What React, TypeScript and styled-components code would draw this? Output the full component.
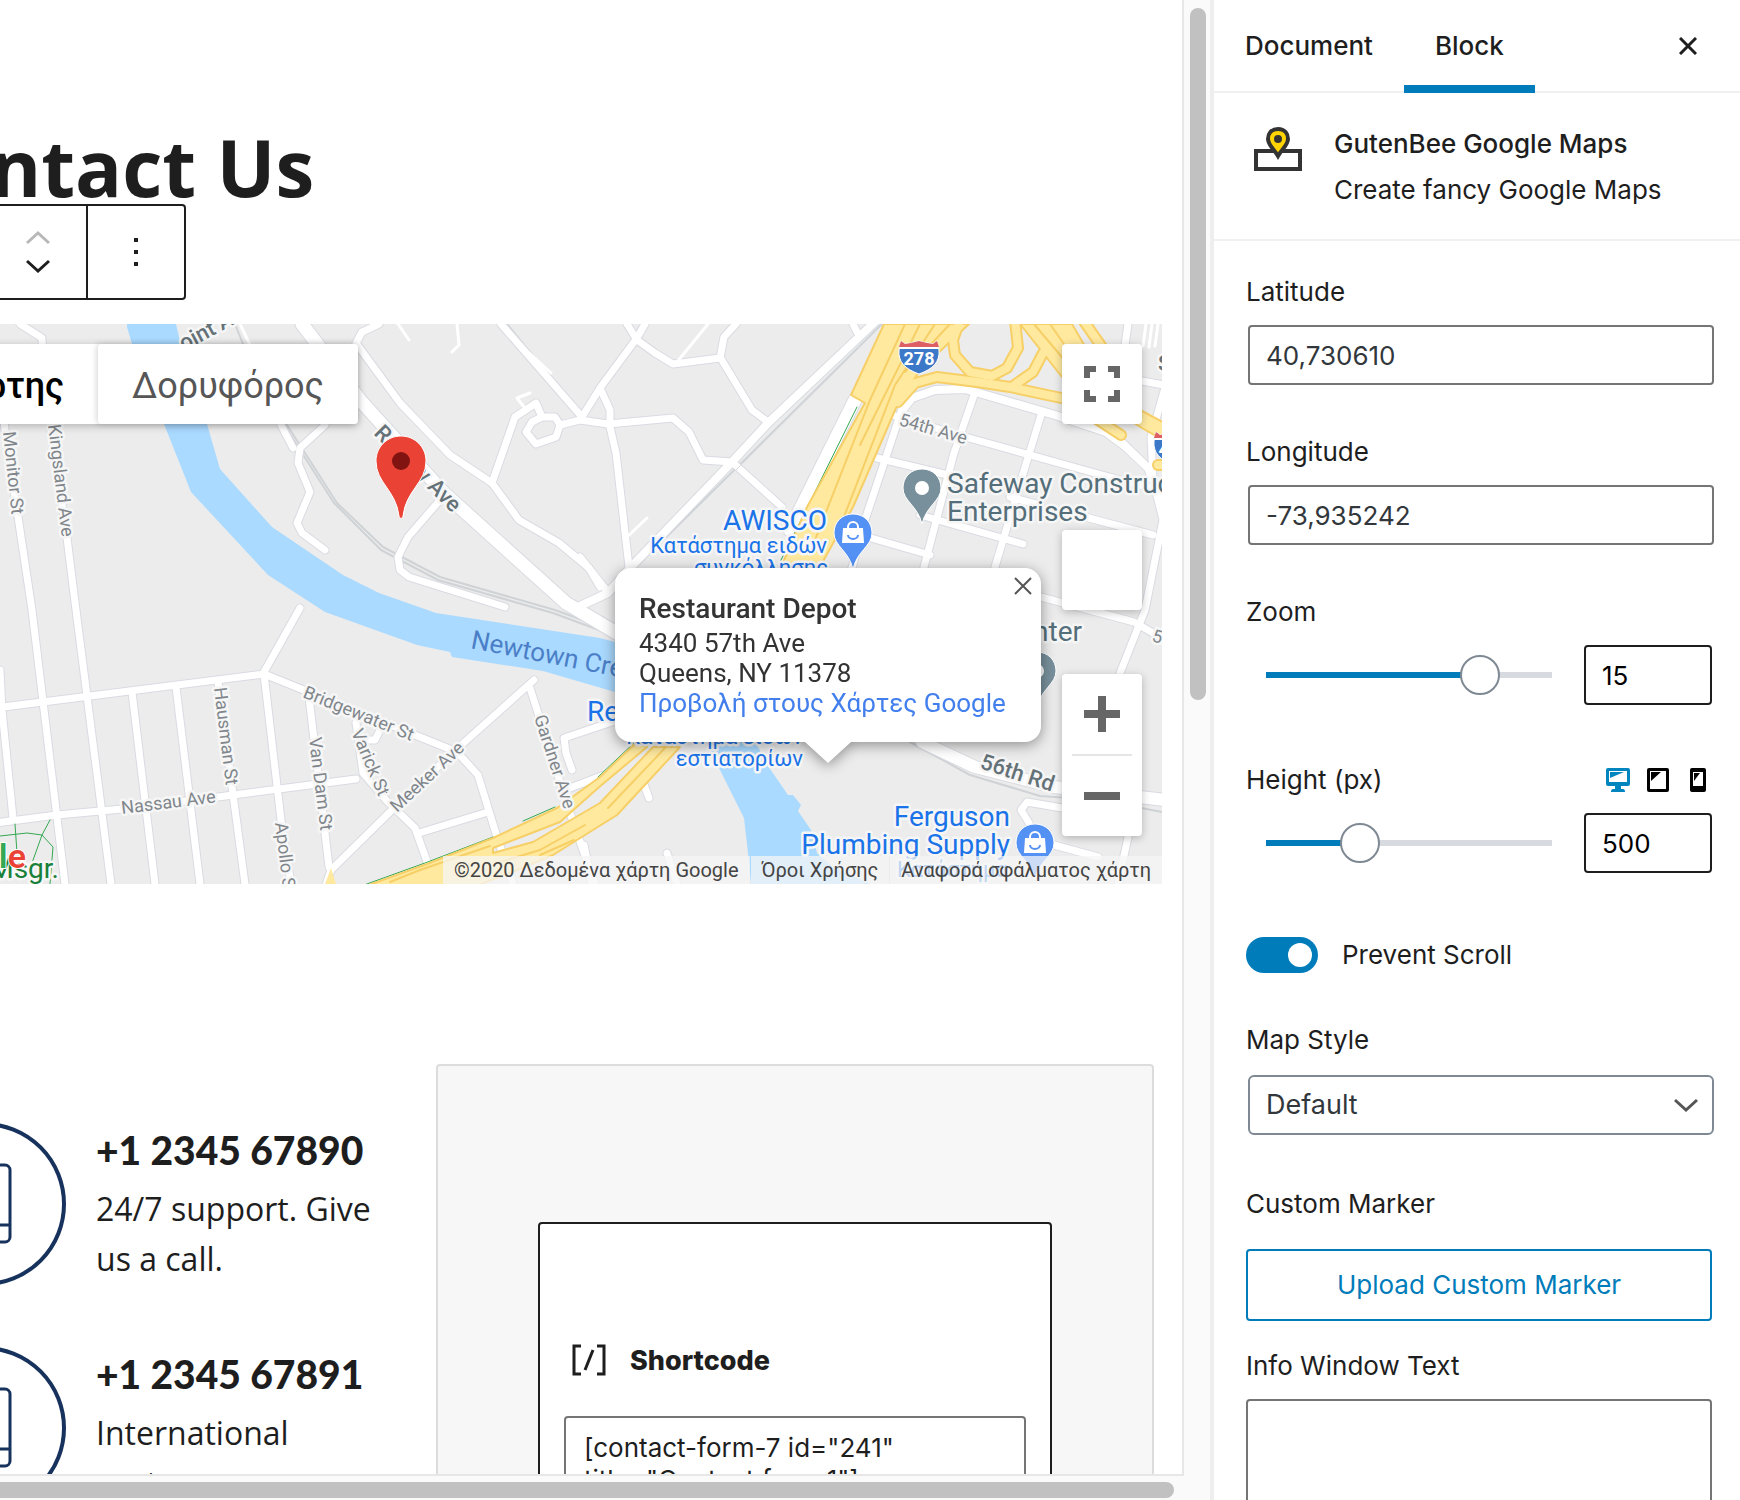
import React, { useState } from "react";
import styled, { createGlobalStyle, css } from "styled-components";

const ui = `Inter, "Liberation Sans", sans-serif`;
const body = `"Open Sans", "Noto Sans", sans-serif`;
const maps = `Roboto, "Noto Sans", sans-serif`;
const accent = "#007cba";
const ink = "#1e1e1e";

const GlobalStyle = createGlobalStyle`
  *, *::before, *::after { box-sizing: border-box; }
  body { margin: 0; background: #fff; color: ${ink}; font-family: ${ui}; font-size: 26px; }
  button, input, select, textarea { font: inherit; color: inherit; margin: 0; }
  h1, h2, h3, p { margin: 0; }
`;

/* ---------- shell ---------- */

const Shell = styled.div`
  display: grid;
  grid-template-columns: minmax(0, 1fr) 530px;
  grid-template-rows: minmax(0, 1fr);
  height: 100vh;
  overflow: hidden;
`;

const Editor = styled.main`
  display: grid;
  grid-template-columns: minmax(0, 1fr) 26px;
  grid-template-rows: minmax(0, 1fr) 24px;
  background: #fafafa;
`;

const Canvas = styled.div`
  overflow: hidden;
  background: #fff;
  border: solid #e7e7e7;
  border-width: 0 2px 2px 0;
`;

const Content = styled.div`
  margin-left: -140px;
  padding: 130px 20px 0 0;
`;

const TrackY = styled.div`
  padding: 8px 4px 0 6px;
`;

const TrackX = styled.div`
  padding: 6px 10px 2px 0;
`;

const ThumbY = styled.div`
  height: 692px;
  width: 16px;
  border-radius: 8px;
  background: #c1c1c1;
`;

const ThumbX = styled.div`
  height: 16px;
  border-radius: 0 8px 8px 0;
  background: #c1c1c1;
`;

/* ---------- canvas blocks ---------- */

const PageTitle = styled.h1`
  padding-left: 32px;
  font: 700 78px/74px ${body};
`;

const Toolbar = styled.div`
  display: flex;
  width: 326px;
  height: 96px;
  margin-bottom: 24px;
  border: 2px solid ${ink};
  border-radius: 4px;
  background: #fff;
`;

const Movers = styled.div`
  flex: 1;
  display: flex;
  flex-direction: column;
  justify-content: center;
  align-items: flex-end;
  gap: 4px;
  padding-right: 32px;
  border-right: 2px solid ${ink};
`;

const IconButton = styled.button`
  display: flex;
  align-items: center;
  justify-content: center;
  padding: 0;
  border: 0;
  background: none;
  cursor: pointer;
`;

const MoverButton = styled(IconButton)`
  width: 32px;
  height: 24px;
`;

const MoreButton = styled(IconButton)`
  width: 96px;
`;

const MapFrame = styled.section`
  position: relative;
  height: 560px;
  overflow: hidden;
  background: #ececec;
  font-family: ${maps};
`;

const MapDrawing = styled.svg`
  position: absolute;
  top: 0;
  right: 0;
  font-family: ${maps};
`;

const mapControl = css`
  position: absolute;
  background: #fff;
  border-radius: 4px;
  box-shadow: 0 2px 8px rgba(0, 0, 0, 0.25);
`;

const MapTypes = styled.div`
  ${mapControl}
  top: 20px;
  left: 20px;
  display: flex;
  height: 80px;
`;

const MapType = styled.button<{ $active?: boolean }>`
  border: 0;
  border-radius: 4px;
  background: #fff;
  padding: 4px 34px 0;
  font-size: 36px;
  font-weight: ${(p) => (p.$active ? 500 : 400)};
  color: ${(p) => (p.$active ? "#000" : "#565656")};
  width: ${(p) => (p.$active ? 218 : 260)}px;
  text-align: right;
  ${(p) => !p.$active && "box-shadow: -1px 0 6px rgba(0, 0, 0, 0.18);"}
`;

const Fullscreen = styled.button`
  ${mapControl}
  top: 20px;
  right: 20px;
  width: 80px;
  height: 80px;
  padding: 0;
  border: 0;
  display: grid;
  place-items: center;
`;

const Pegman = styled.div`
  ${mapControl}
  top: 206px;
  right: 20px;
  width: 80px;
  height: 80px;
`;

const ZoomControl = styled.div`
  ${mapControl}
  top: 350px;
  right: 20px;
  width: 80px;
  height: 162px;
  padding: 0 10px;
  display: flex;
  flex-direction: column;
`;

const ZoomButton = styled.button`
  flex: 1;
  padding: 0;
  border: 0;
  background: none;
  display: grid;
  place-items: center;
  & + & {
    border-top: 2px solid #e6e6e6;
  }
`;

const InfoWindow = styled.div`
  position: absolute;
  top: 244px;
  right: 121px;
  width: 426px;
  height: 174px;
  padding: 25px 24px 0;
  border-radius: 16px;
  background: #fff;
  color: #333;
  font-size: 26px;
  line-height: 30px;
  filter: drop-shadow(0 3px 7px rgba(0, 0, 0, 0.4));
  &::after {
    content: "";
    position: absolute;
    top: 100%;
    left: 50%;
    margin-left: -23px;
    border: solid transparent;
    border-width: 21px 23px 0;
    border-top-color: #fff;
  }
`;

const InfoTitle = styled.h2`
  font-size: 28px;
  line-height: 32px;
  font-weight: 500;
  margin-bottom: 3px;
`;

const InfoLink = styled.a`
  color: #427fed;
  text-decoration: none;
  white-space: nowrap;
`;

const InfoClose = styled.button`
  position: absolute;
  top: 6px;
  right: 6px;
  width: 24px;
  height: 24px;
  padding: 0;
  border: 0;
  background: none;
  display: grid;
  place-items: center;
`;

const Attribution = styled.div`
  position: absolute;
  right: 0;
  bottom: 0;
  display: flex;
  height: 28px;
  font-size: 20px;
  line-height: 28px;
  color: #444;
  white-space: nowrap;
  & > * {
    padding: 0 11px;
    background: rgba(245, 245, 245, 0.75);
  }
  & > * + * {
    margin-left: 1px;
  }
  a {
    color: inherit;
    text-decoration: none;
  }
`;

const Columns = styled.div`
  display: grid;
  grid-template-columns: minmax(0, 1fr) 718px;
  margin: 180px 8px 0 0;
`;

const Contacts = styled.div`
  display: flex;
  flex-direction: column;
  gap: 46px;
  padding: 58px 32px 0 42px;
`;

const Contact = styled.div`
  display: flex;
  gap: 30px;
  height: 178px;
`;

const ContactIcon = styled.svg`
  flex: none;
`;

const ContactTitle = styled.h3`
  padding-top: 4px;
  font: 900 39px/48px Lato, ${ui};
`;

const ContactText = styled.p`
  margin-top: 10px;
  font: 400 32px/50px ${body};
`;

const FormColumn = styled.div`
  height: 700px;
  padding: 156px 100px 0;
  border: 2px solid #dcdcdc;
  border-radius: 4px;
  background: #f7f7f7;
`;

const Shortcode = styled.div`
  height: 500px;
  padding: 112px 24px 0;
  border: 2px solid ${ink};
  border-radius: 4px;
  background: #fff;
`;

const ShortcodeLabel = styled.label`
  display: flex;
  align-items: center;
  gap: 24px;
  height: 48px;
  margin-bottom: 32px;
  padding-left: 8px;
  font-size: 27px;
  font-weight: 800;
`;

const CodeArea = styled.textarea`
  display: block;
  width: 100%;
  height: 160px;
  padding: 14px 18px;
  border: 2px solid #757575;
  border-radius: 4px;
  resize: none;
  overflow: hidden;
  font-size: 26px;
  line-height: 32px;
`;

/* ---------- sidebar ---------- */

const Sidebar = styled.aside`
  overflow: hidden;
  border-left: 4px solid #eeeeee;
  background: #fff;
  line-height: 32px;
`;

const Tabs = styled.div`
  display: flex;
  height: 93px;
  border-bottom: 2px solid #f0f0f0;
`;

const Tab = styled.button<{ $active?: boolean }>`
  height: 93px;
  padding: 0 31px 2px;
  border: 0;
  background: none;
  font-weight: 500;
  box-shadow: ${(p) => (p.$active ? `inset 0 -8px 0 ${accent}` : "none")};
`;

const CloseButton = styled(IconButton)`
  width: 48px;
  margin-left: auto;
  margin-right: 28px;
`;

const BlockCard = styled.div`
  display: flex;
  gap: 32px;
  padding: 28px 40px 0;
  height: 148px;
  border-bottom: 2px solid #f0f0f0;
`;

const BlockName = styled.h2`
  font-size: 26px;
  line-height: 46px;
  font-weight: 500;
`;

const BlockInfo = styled.p`
  line-height: 46px;
`;

const BlockIcon = styled.svg`
  margin-top: 6px;
  flex: none;
`;

const Panel = styled.div`
  display: flex;
  flex-direction: column;
  padding: 34px 28px 0 32px;
`;

const Field = styled.div<{ $h: number }>`
  height: ${(p) => p.$h}px;
`;

const LabelRow = styled.div<{ $gap?: number }>`
  display: flex;
  justify-content: space-between;
  align-items: center;
  height: 34px;
  margin-bottom: ${(p) => p.$gap ?? 16}px;
`;

const Devices = styled.div`
  display: flex;
  margin-right: -6px;
`;

const DeviceButton = styled(IconButton)`
  width: 40px;
  height: 32px;
`;

const box = css`
  display: block;
  height: 60px;
  border: 2px solid #757575;
  border-radius: 4px;
  background: #fff;
  padding: 0 16px;
`;

const TextInput = styled.input`
  ${box}
  width: 100%;
  margin-left: 2px;
  color: #32373c;
`;

const NumberInput = styled.input`
  ${box}
  width: 128px;
  border-color: ${ink};
  color: #000;
  appearance: textfield;
  &::-webkit-inner-spin-button {
    appearance: none;
  }
`;

const SliderRow = styled.div`
  display: flex;
  align-items: center;
  gap: 32px;
  padding-left: 20px;
`;

const Slider = styled.input`
  flex: 1;
  min-width: 0;
  height: 40px;
  appearance: none;
  background: linear-gradient(
      90deg,
      ${accent} var(--fill),
      #d7dade var(--fill)
    )
    center / 100% 6px no-repeat;
  &::-webkit-slider-thumb {
    appearance: none;
    width: 40px;
    height: 40px;
    border: 2px solid #7e8993;
    border-radius: 50%;
    background: #fff;
  }
`;

const ToggleRow = styled.label`
  display: flex;
  align-items: center;
  gap: 24px;
  height: 36px;
  margin-bottom: 50px;
`;

const Toggle = styled.input`
  appearance: none;
  width: 72px;
  height: 36px;
  padding: 6px;
  border-radius: 18px;
  background: #6c7781;
  display: flex;
  &::before {
    content: "";
    width: 24px;
    height: 24px;
    border-radius: 50%;
    background: #fff;
  }
  &:checked {
    background: ${accent};
    justify-content: flex-end;
  }
`;

const SelectWrap = styled.div`
  display: grid;
  margin: 0 -2px 0 2px;
  align-items: center;
  & > * {
    grid-area: 1 / 1;
  }
  svg {
    justify-self: end;
    margin-right: 16px;
    pointer-events: none;
  }
`;

const Select = styled.select`
  ${box}
  appearance: none;
  border-color: #7e8993;
  border-radius: 6px;
  color: #32373c;
  font-size: 27px;
`;

const UploadButton = styled.button`
  width: 100%;
  height: 72px;
  border: 2px solid ${accent};
  border-radius: 4px;
  background: #fff;
  color: ${accent};
`;

const TextArea = styled.textarea`
  display: block;
  width: 100%;
  height: 180px;
  border: 2px solid #757575;
  border-radius: 4px;
  resize: none;
`;

/* ---------- map data ---------- */

const water =
  "M127 324L127 327L132 344L164 424L191 492L268 575L325 612L417 645L450 652L452 657L543 671L615 692L700 730L720 770L744 818L748 853L751 884L871 884L833 867L817 853L811 830L798 811L801 805L793 795L788 795L766 763L750 730L730 680L615 642L600 638L436 613L379 593L343 575L272 527L220 469L207 424L180 341L176 324Z";

const streets = [
  "M0 384L5 430L32 610L65 884",
  "M50 424L67 538L76 610L111 884",
  "M20 324L42 338L43 360",
  "M0 670L2 710L13 818",
  "M-5 708L264 674",
  "M-5 823L57 815L122 809L218 797L356 779",
  "M132 692L155 884",
  "M176 687L200 884",
  "M218 682L245 884",
  "M264 674L281 820L291 884",
  "M264 672L300 608",
  "M264 674L457 752L478 775L497 837L513 884",
  "M325 888L331 870L394 808L459 747L534 680",
  "M530 688L570 813L595 884",
  "M309 697L329 867",
  "M356 723L363 773L386 800L415 828L429 867",
  "M379 732L375 740L364 740",
  "M419 833L488 812",
  "M615 721L564 738L566 753L572 770",
  "M570 788L604 775",
  "M379 324L362 332L356 343L400 403L450 455L492 483L519 520L559 543L589 568L600 587",
  "M492 483L515 417L536 403L542 417",
  "M542 417L555 417L560 425L556 437L536 444L526 432L532 422Z",
  "M560 425L580 420L608 424L673 418L689 432L703 460L732 462",
  "M501 324L582 417L600 388L637 338L645 324",
  "M627 324L637 340L655 353L673 364L720 358L724 337L736 324",
  "M720 357L752 410L768 422",
  "M600 388L610 410L610 427L616 453L629 567",
  "M732 462L782 507",
  "M580 557L608 592",
  "M853 324L857 332",
  "M325 425L300 448L298 463L310 492L297 523L302 533L325 550",
  "M281 425L293 448",
  "M440 500L408 537L398 557L400 570L409 577L505 607",
  "M904 403L884 463L865 520L850 575",
  "M892 415L969 438L1102 475L1150 488",
  "M873 457L948 475M1010 497L1040 505M1085 517L1153 535",
  "M871 538L930 555",
  "M974 395L954 453L924 567",
  "M1041 415L1019 487L995 567",
  "M920 515L1023 544",
  "M1170 370L1151 437L1153 480L1163 520L1145 610L1120 673",
  "M1142 381L1170 386",
  "M1128 324L1125 345",
  "M1120 440L1150 470",
  "M1041 597L1134 622L1153 633L1170 636",
  "M1062 808L1027 802L1021 810L1029 823",
  "M1054 845L1098 857",
  "M1128 837L1118 884",
  "M643 782L649 798",
  "M667 853L677 884",
  "M584 845L592 884",
];

const avenues = [
  { d: "M302 324L360 400L444 493L566 603L620 635", w: 13 },
  { d: "M904 408L912 398L935 390L965 389L1055 415L1106 432L1126 447L1148 468L1165 510", w: 8 },
  { d: "M922 742L975 767L1054 787L1165 800", w: 12 },
  { d: "M877 320L768 423L732 462L631 567L608 593L580 606", w: 8 },
  { d: "M856 398L790 530", w: 13 },
];

const lanes = [
  "M398 324L409 340",
  "M457 324L459 345L452 352",
  "M526 350L551 373",
  "M627 537L647 518",
  "M677 362L708 324",
  "M517 398L530 393M517 398L524 407",
  "M240 324L250 345",
  "M1146 324L1143 346M1152 324L1149 347M1158 324L1155 346",
];

const rails = [
  "M287 425L337 503L383 547L440 577L555 610L615 632",
  "M284 425L334 503L381 550L438 580L553 613L615 636",
  "M507 324L546 372",
  "M882 324L630 573",
  "M910 742L970 775L1040 796L1100 800L1162 812",
  "M235 324L243 344",
];

const motorway = [
  "M884 324L851 395L865 403L807 507L782 565L821 565L853 507L896 408L920 370L969 324Z",
  "M637 742L600 777L557 808L493 838L427 864L366 886L470 888L510 873L553 855L617 815L680 747L653 747L600 803L533 842L493 853L493 848L560 822L598 788L647 747Z",
  "M1020 324L1062 377L1142 428L1170 444L1170 426L1142 411L1100 372L1072 324Z",
];

const ramps = [
  "M960 320L953 340L955 355L970 372L992 376L1007 368L1018 348L1015 320",
  "M898 402L915 383L937 377L977 382L1010 387L1047 395L1066 399L1121 435",
  "M1043 353L1033 372L1013 386",
  "M1083 320L1104 350",
  "M1158 465L1170 465",
];

const laneLines = [
  "M905 324L870 400L815 540",
  "M935 324L895 385L835 540",
  "M920 324L860 445",
  "M950 324L905 372",
  "M665 748L608 808",
  "M585 825L540 850L500 862",
  "M574 840L540 855",
  "M490 846L420 870L390 882",
  "M1034 324L1066 362",
  "M1050 324L1068 350",
];

type MapLabel = {
  t: string;
  x: number;
  y: number;
  r?: number;
  kind: "street" | "avenue" | "poi" | "place" | "sub" | "water" | "park";
  end?: boolean;
};

const labelStyle = {
  street: { size: 18, fill: "#80868b", weight: 400 },
  avenue: { size: 22, fill: "#647278", weight: 500 },
  poi: { size: 28, fill: "#546e7a", weight: 400 },
  place: { size: 28, fill: "#1a73e8", weight: 400 },
  sub: { size: 22, fill: "#1a73e8", weight: 400 },
  water: { size: 26, fill: "#4a7fc8", weight: 400 },
  park: { size: 28, fill: "#188038", weight: 400 },
};

const labels: MapLabel[] = [
  { t: "Monitor St", x: 3, y: 432, r: 84, kind: "street" },
  { t: "Kingsland Ave", x: 48, y: 425, r: 83, kind: "street" },
  { t: "Hausman St", x: 214, y: 688, r: 83, kind: "street" },
  { t: "Van Dam St", x: 309, y: 738, r: 83, kind: "street" },
  { t: "Varick St", x: 351, y: 732, r: 67, kind: "street" },
  { t: "Bridgewater St", x: 302, y: 697, r: 22, kind: "street" },
  { t: "Meeker Ave", x: 397, y: 813, r: -43, kind: "street" },
  { t: "Nassau Ave", x: 122, y: 814, r: -7, kind: "street" },
  { t: "Apollo St", x: 275, y: 823, r: 83, kind: "street" },
  { t: "Gardner Ave", x: 534, y: 717, r: 72, kind: "street" },
  { t: "54th Ave", x: 898, y: 425, r: 16, kind: "street" },
  { t: "53rd Ave", x: 1151, y: 641, r: 16, kind: "street" },
  { t: "Review Ave", x: 373, y: 434, r: 45, kind: "avenue" },
  { t: "oint Ave", x: 184, y: 351, r: -28, kind: "avenue" },
  { t: "56th Rd", x: 979, y: 768, r: 18, kind: "avenue" },
  { t: "S", x: 1158, y: 371, kind: "avenue" },
  { t: "Newtown Creek", x: 470, y: 648, r: 11, kind: "water" },
  { t: "Safeway Construction", x: 947, y: 493, kind: "poi" },
  { t: "Enterprises", x: 947, y: 521, kind: "poi" },
  { t: "Center", x: 1082, y: 641, kind: "poi", end: true },
  { t: "AWISCO", x: 827, y: 530, kind: "place", end: true },
  { t: "Κατάστημα ειδών", x: 827, y: 553, kind: "sub", end: true },
  { t: "συγκόλλησης", x: 828, y: 575, kind: "sub", end: true },
  { t: "Restaurant", x: 587, y: 721, kind: "place" },
  { t: "Κατάστημα ειδών", x: 803, y: 744, kind: "sub", end: true },
  { t: "εστιατορίων", x: 803, y: 766, kind: "sub", end: true },
  { t: "Ferguson", x: 1010, y: 826, kind: "place", end: true },
  { t: "Plumbing Supply", x: 1010, y: 854, kind: "place", end: true },
  { t: "Κατάστημα", x: 1008, y: 877, kind: "sub", end: true },
  { t: "Msgr.", x: 59, y: 878, kind: "park", end: true },
];

const Pin = ({ x, y, fill, shop }: { x: number; y: number; fill: string; shop?: boolean }) => (
  <g transform={`translate(${x} ${y})`}>
    <path
      d="M0 -19C-11 -19 -19 -11 -19 0C-19 13 -4 18 0 36C4 18 19 13 19 0C19 -11 11 -19 0 -19Z"
      fill={fill}
      stroke="#fff"
      strokeWidth="1"
    />
    {shop ? (
      <>
        <path d="M-10 -5H10L11 10H-11Z" fill="#fff" />
        <path d="M-5 -3V-6A5 5 0 0 1 5 -6V-3" fill="none" stroke="#fff" strokeWidth="2" />
        <path d="M-5 2A5 4 0 0 0 5 2" fill="none" stroke={fill} strokeWidth="2" />
      </>
    ) : (
      <circle r="7" fill="#fff" />
    )}
  </g>
);

const Shield = ({ x, y, text }: { x: number; y: number; text: string }) => (
  <g transform={`translate(${x} ${y})`}>
    <path
      d="M2 0L6 3L12 2L20 0L28 2L34 3L38 0L40 9C41 21 34 28 20 33C6 28 -1 21 0 9Z"
      fill="#3b78c8"
      stroke="#fff"
      strokeWidth="1"
    />
    <path d="M2 0L6 3L12 2L20 0L28 2L34 3L38 0L40 6H0Z" fill="#dd5f64" />
    <path d="M0 7H40" stroke="#fff" strokeWidth="2" />
    <text x="20" y="24" fontSize="18" fontWeight="700" fill="#fff" textAnchor="middle">
      {text}
    </text>
  </g>
);

const StreetMap = () => (
  <MapDrawing width="1162" height="560" viewBox="0 324 1162 560" aria-label="Map">
    <rect y="324" width="1162" height="560" fill="#ececec" />
    <path d={water} fill="#aadaff" />
    <g fill="none" strokeLinejoin="round" strokeLinecap="round">
      <g stroke="#cfd3d6" strokeWidth="2">
        {rails.map((d) => <path key={d} d={d} />)}
      </g>
      <g stroke="#d9dbe1">
        {streets.map((d) => <path key={d} d={d} strokeWidth="9" />)}
        {avenues.map((a) => <path key={a.d} d={a.d} strokeWidth={a.w + 2} />)}
      </g>
      <g stroke="#fff">
        {streets.map((d) => <path key={d} d={d} strokeWidth="7" />)}
        {avenues.map((a) => <path key={a.d} d={a.d} strokeWidth={a.w} />)}
        {lanes.map((d) => <path key={d} d={d} strokeWidth="3" />)}
      </g>
      <path d="M879 328L736 470" stroke="#d9dbe1" strokeWidth="1" />
      <g stroke="#34a853" strokeWidth="1">
        <path d="M857 407L807 508L780 562M635 742L598 777M555 807L523 821M493 837L425 863L364 885" />
        <path d="M0 836L27 833L42 835L53 847L50 884M15 824L17 853M50 820L42 835L32 863" />
      </g>
      <g stroke="#f7cf67">
        {ramps.map((d) => <path key={d} d={d} strokeWidth="12" />)}
      </g>
      <g fill="#ffe99f" stroke="#f7cf67" strokeWidth="2">
        {motorway.map((d) => <path key={d} d={d} />)}
      </g>
      <path d="M331 868L325 884H336Z" fill="#ffe99f" />
      <g stroke="#ffe99f">
        {ramps.map((d) => <path key={d} d={d} strokeWidth="8" />)}
      </g>
      <g stroke="#f7cf67" strokeWidth="2">
        {laneLines.map((d) => <path key={d} d={d} />)}
      </g>
    </g>
    <Pin x={1037} y={671} fill="#78909c" />
    {labels.map((l) => {
      const s = labelStyle[l.kind];
      return (
        <text
          key={l.t + l.y}
          transform={`translate(${l.x} ${l.y}) rotate(${l.r ?? 0})`}
          fontSize={s.size}
          fontWeight={s.weight}
          fill={s.fill}
          stroke={l.kind === "water" ? "none" : "#f6f6f6"}
          strokeWidth="5"
          strokeLinejoin="round"
          paintOrder="stroke"
          textAnchor={l.end ? "end" : "start"}
        >
          {l.t}
        </text>
      );
    })}
    <Shield x={899} y={341} text="278" />
    <Shield x={1154} y={432} text="495" />
    <Pin x={922} y={488} fill="#78909c" />
    <Pin x={853} y={533} fill="#5491f5" shop />
    <Pin x={1035} y={843} fill="#5491f5" shop />
    <path
      d="M401 436C387 436 376 447 376 461C376 483 396 490 399 516C399 519 403 519 403 516C406 490 426 483 426 461C426 447 415 436 401 436Z"
      fill="#ea4335"
      stroke="#fff"
      strokeWidth="1"
    />
    <circle cx="401" cy="461" r="9" fill="#811411" />
    <text x="26" y="868" fontSize="34" fontWeight="600" textAnchor="end" fill="#4285f4" stroke="#fff" strokeWidth="2" paintOrder="stroke">
      Goog<tspan fill="#34a853">l</tspan>
      <tspan fill="#ea4335">e</tspan>
    </text>
  </MapDrawing>
);

/* ---------- icons ---------- */

const Chevron = ({ up, color = ink }: { up?: boolean; color?: string }) => (
  <svg width="24" height="16" viewBox="0 0 24 16" fill="none" stroke={color} strokeWidth="3">
    <path d={up ? "M1 13L12 3L23 13" : "M1 3L12 13L23 3"} />
  </svg>
);

const Cross = ({ color, w }: { color: string; w: number }) => (
  <svg width="18" height="18" viewBox="0 0 18 18" stroke={color} strokeWidth={w}>
    <path d="M1 1L17 17M17 1L1 17" />
  </svg>
);

const PhoneCircle = () => (
  <ContactIcon width="164" height="164" viewBox="0 0 164 164" fill="none" stroke="#17325c">
    <circle cx="82" cy="82" r="80" strokeWidth="4" />
    <rect x="56" y="43" width="52" height="77" rx="5" strokeWidth="3" />
    <path d="M56 103H108" strokeWidth="3" />
  </ContactIcon>
);

const Desktop = () => (
  <svg width="24" height="24" viewBox="0 0 24 24" fill="#0085be">
    <path fillRule="evenodd" d="M2 0H22Q24 0 24 2V16Q24 18 22 18H15V21H17Q19 21 19 24H5Q5 21 7 21H9V18H2Q0 18 0 16V2Q0 0 2 0ZM3 3V14H21V3Z" />
    <path d="M4 4H18L4 10Z" />
  </svg>
);

const Tablet = () => (
  <svg width="22" height="24" viewBox="0 0 22 24">
    <path fillRule="evenodd" d="M2 0H20Q22 0 22 2V22Q22 24 20 24H2Q0 24 0 22V2Q0 0 2 0ZM3 3V21H19V3Z" />
    <path d="M4 4H14L4 13Z" />
  </svg>
);

const Phone = () => (
  <svg width="16" height="24" viewBox="0 0 16 24">
    <path fillRule="evenodd" d="M2 0H14Q16 0 16 2V22Q16 24 14 24H2Q0 24 0 22V2Q0 0 2 0ZM3 4V18H13V4Z" />
    <path d="M4 5H10L4 13Z" />
  </svg>
);

/* ---------- page ---------- */

type RangeProps = { id: string; label: string; min: number; max: number; initial: number };

const RangeField = ({ id, label, min, max, initial }: RangeProps) => {
  const [value, setValue] = useState(initial);
  const fill = `${((value - min) / (max - min)) * 100}%`;
  const change = (e: React.ChangeEvent<HTMLInputElement>) => setValue(Number(e.target.value));
  return (
    <SliderRow>
      <Slider
        id={id}
        type="range"
        min={min}
        max={max}
        value={value}
        onChange={change}
        style={{ "--fill": fill } as React.CSSProperties}
      />
      <NumberInput type="number" aria-label={label} value={value} onChange={change} />
    </SliderRow>
  );
};

const contacts = [
  { phone: "+1 2345 67890", text: "24/7 support. Give us a call." },
  { phone: "+1 2345 67891", text: "International customers" },
];

export default function App() {
  return (
    <>
      <GlobalStyle />
      <Shell>
        <Editor>
          <Canvas>
            <Content>
              <PageTitle>Contact Us</PageTitle>
              <Toolbar>
                <Movers>
                  <MoverButton aria-label="Move up"><Chevron up color="#b8b8b8" /></MoverButton>
                  <MoverButton aria-label="Move down"><Chevron /></MoverButton>
                </Movers>
                <MoreButton aria-label="More options">
                  <svg width="4" height="28" fill={ink}>
                    <path d="M0 0H4V4H0ZM0 12H4V16H0ZM0 24H4V28H0Z" />
                  </svg>
                </MoreButton>
              </Toolbar>

              <MapFrame>
                <StreetMap />
                <MapTypes>
                  <MapType $active>Χάρτης</MapType>
                  <MapType>Δορυφόρος</MapType>
                </MapTypes>
                <Fullscreen aria-label="Fullscreen">
                  <svg width="36" height="36" fill="none" stroke="#666" strokeWidth="6">
                    <path d="M3 12V3H12M24 3H33V12M33 24V33H24M12 33H3V24" />
                  </svg>
                </Fullscreen>
                <Pegman />
                <ZoomControl>
                  <ZoomButton aria-label="Zoom in">
                    <svg width="36" height="36" stroke="#666" strokeWidth="8">
                      <path d="M0 18H36M18 0V36" />
                    </svg>
                  </ZoomButton>
                  <ZoomButton aria-label="Zoom out">
                    <svg width="36" height="36" stroke="#666" strokeWidth="8">
                      <path d="M0 18H36" />
                    </svg>
                  </ZoomButton>
                </ZoomControl>
                <InfoWindow>
                  <InfoTitle>Restaurant Depot</InfoTitle>
                  <p>4340 57th Ave</p>
                  <p>Queens, NY 11378</p>
                  <InfoLink href="#map">Προβολή στους Χάρτες Google</InfoLink>
                  <InfoClose aria-label="Close"><Cross color="#555" w={2} /></InfoClose>
                </InfoWindow>
                <Attribution>
                  <span>©2020 Δεδομένα χάρτη Google</span>
                  <a href="#terms">Όροι Χρήσης</a>
                  <a href="#report">Αναφορά σφάλματος χάρτη</a>
                </Attribution>
              </MapFrame>

              <Columns>
                <Contacts>
                  {contacts.map((c) => (
                    <Contact key={c.phone}>
                      <PhoneCircle />
                      <div>
                        <ContactTitle>{c.phone}</ContactTitle>
                        <ContactText>{c.text}</ContactText>
                      </div>
                    </Contact>
                  ))}
                </Contacts>
                <FormColumn>
                  <Shortcode>
                    <ShortcodeLabel htmlFor="shortcode">
                      <svg width="34" height="32" viewBox="0 0 34 32" fill="none" stroke={ink} strokeWidth="3">
                        <path d="M9 2H2V30H9M25 2H32V30H25M21 6L13 26" />
                      </svg>
                      Shortcode
                    </ShortcodeLabel>
                    <CodeArea id="shortcode" defaultValue={'[contact-form-7 id="241"\ntitle="Contact form 1"]'} />
                  </Shortcode>
                </FormColumn>
              </Columns>
            </Content>
          </Canvas>
          <TrackY><ThumbY /></TrackY>
          <TrackX><ThumbX /></TrackX>
        </Editor>

        <Sidebar>
          <Tabs>
            <Tab>Document</Tab>
            <Tab $active>Block</Tab>
            <CloseButton aria-label="Close settings"><Cross color={ink} w={3} /></CloseButton>
          </Tabs>
          <BlockCard>
            <BlockIcon width="48" height="44" viewBox="0 0 48 44">
              <path d="M2 24H46V42H2Z" fill="none" stroke="#333" strokeWidth="4" />
              <path d="M24 2C17 2 14 7 14 12C14 18 20 22 24 29C28 22 34 18 34 12C34 7 31 2 24 2Z" fill="#ffd400" stroke="#333" strokeWidth="4" />
              <circle cx="24" cy="12" r="4" fill="#333" />
            </BlockIcon>
            <div>
              <BlockName>GutenBee Google Maps</BlockName>
              <BlockInfo>Create fancy Google Maps</BlockInfo>
            </div>
          </BlockCard>
          <Panel>
            <Field $h={160}>
              <LabelRow><label htmlFor="lat">Latitude</label></LabelRow>
              <TextInput id="lat" defaultValue="40,730610" />
            </Field>
            <Field $h={160}>
              <LabelRow><label htmlFor="lng">Longitude</label></LabelRow>
              <TextInput id="lng" defaultValue="-73,935242" />
            </Field>
            <Field $h={168}>
              <LabelRow><label htmlFor="zoom">Zoom</label></LabelRow>
              <RangeField id="zoom" label="Zoom value" min={0} max={19} initial={15} />
            </Field>
            <Field $h={174}>
              <LabelRow>
                <label htmlFor="height">Height (px)</label>
                <Devices>
                  <DeviceButton aria-label="Desktop"><Desktop /></DeviceButton>
                  <DeviceButton aria-label="Tablet"><Tablet /></DeviceButton>
                  <DeviceButton aria-label="Mobile"><Phone /></DeviceButton>
                </Devices>
              </LabelRow>
              <RangeField id="height" label="Height value" min={0} max={1660} initial={500} />
            </Field>
            <ToggleRow>
              <Toggle type="checkbox" role="switch" defaultChecked />
              Prevent Scroll
            </ToggleRow>
            <Field $h={164}>
              <LabelRow $gap={18}><label htmlFor="style">Map Style</label></LabelRow>
              <SelectWrap>
                <Select id="style" defaultValue="Default"><option>Default</option></Select>
                <Chevron color="#555" />
              </SelectWrap>
            </Field>
            <Field $h={162}>
              <LabelRow $gap={28}>Custom Marker</LabelRow>
              <UploadButton>Upload Custom Marker</UploadButton>
            </Field>
            <LabelRow><label htmlFor="info">Info Window Text</label></LabelRow>
            <TextArea id="info" />
          </Panel>
        </Sidebar>
      </Shell>
    </>
  );
}
